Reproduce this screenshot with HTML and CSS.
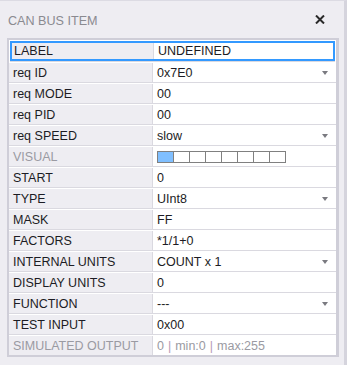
FILE: index.html
```html
<!DOCTYPE html>
<html>
<head>
<meta charset="utf-8">
<link rel="stylesheet" href="styles.css">
</head>
<body>
<div class="window">
  <div class="titlebar">
    <span class="title">CAN BUS ITEM</span>
    <svg class="close" width="10" height="9" viewBox="0 0 10 9"><path d="M1 0.5 L9 8.5 M9 0.5 L1 8.5" stroke="#2a2a2a" stroke-width="2"/></svg>
  </div>
  <div class="grid">
    <div class="row selected"><div class="name">LABEL</div><div class="value">UNDEFINED</div></div>
    <div class="row"><div class="name">req ID</div><div class="value">0x7E0<span class="arrow"></span></div></div>
    <div class="row"><div class="name">req MODE</div><div class="value">00</div></div>
    <div class="row"><div class="name">req PID</div><div class="value">00</div></div>
    <div class="row"><div class="name">req SPEED</div><div class="value">slow<span class="arrow"></span></div></div>
    <div class="row"><div class="name dim">VISUAL</div><div class="value"><div class="bar"><span class="seg on"></span><span class="seg"></span><span class="seg"></span><span class="seg"></span><span class="seg"></span><span class="seg"></span><span class="seg"></span><span class="seg"></span></div></div></div>
    <div class="row"><div class="name">START</div><div class="value">0</div></div>
    <div class="row"><div class="name">TYPE</div><div class="value">UInt8<span class="arrow"></span></div></div>
    <div class="row"><div class="name">MASK</div><div class="value">FF</div></div>
    <div class="row"><div class="name">FACTORS</div><div class="value">*1/1+0</div></div>
    <div class="row"><div class="name">INTERNAL UNITS</div><div class="value">COUNT x 1<span class="arrow"></span></div></div>
    <div class="row"><div class="name">DISPLAY UNITS</div><div class="value">0</div></div>
    <div class="row"><div class="name">FUNCTION</div><div class="value">---<span class="arrow"></span></div></div>
    <div class="row"><div class="name">TEST INPUT</div><div class="value">0x00</div></div>
    <div class="row last"><div class="name dim">SIMULATED OUTPUT</div><div class="value dim">0 <span class="pipe">|</span> min:0 <span class="pipe">|</span> max:255</div></div>
  </div>
</div>
</body>
</html>
```
FILE: styles.css
```css
html, body {
  margin: 0;
  padding: 0;
}
body {
  width: 347px;
  height: 365px;
  overflow: hidden;
  background: #eeedf2;
  font-family: "Liberation Sans", Arial, sans-serif;
}
.window {
  box-sizing: border-box;
  width: 347px;
  height: 365px;
  background: #eeedf2;
  border-top: 1px solid #dcdbe3;
  border-right: 3px solid #d5d4dd;
  padding: 0 5px 0 7px;
}
.titlebar {
  height: 37px;
  display: flex;
  align-items: center;
  justify-content: space-between;
  padding: 0 14px 0 1px;
}
.title {
  font-size: 12.6px;
  color: #8a8a90;
  padding-top: 2px;
}
.close {
  display: block;
  margin-top: 0;
}
.grid {
  border: 2px solid #cfced8;
  border-right-width: 3px;
  background: #ffffff;
  padding-top: 1px;
}
.row {
  display: grid;
  grid-template-columns: 144px 1fr;
  height: 21px;
  box-sizing: border-box;
  border-bottom: 1px solid #dad9e0;
  font-size: 12.5px;
  color: #1c1c24;
  padding-top: 1px;
}
.row.last {
  border-bottom: none;
  height: 20px;
}
.row.selected {
  box-shadow: inset 0 0 0 2px #3399ff;
  margin: 0 1px 0 1px;
  height: 21px;
  padding-top: 0;
}
.name {
  background: #eeedf2;
  border-right: 1px solid #dad9e0;
  padding-left: 4px;
  display: flex;
  align-items: center;
  white-space: nowrap;
}
.selected .name {
  margin: 2px 0 2px 2px;
  padding-left: 2px;
}
.value {
  position: relative;
  padding-left: 4px;
  display: flex;
  align-items: center;
  white-space: nowrap;
}
.dim {
  color: #9a9aa2;
}
.pipe {
  color: #b79bb5;
  margin: 0 4px;
}
.arrow {
  position: absolute;
  right: 8px;
  top: 8px;
  width: 0;
  height: 0;
  border-left: 3.5px solid transparent;
  border-right: 3.5px solid transparent;
  border-top: 4px solid #7a7a80;
}
.bar {
  display: flex;
  border: 1px solid #808080;
  height: 12px;
  box-sizing: border-box;
}
.seg {
  width: 15px;
  border-right: 1px solid #808080;
  background: #ffffff;
}
.seg:last-child {
  border-right: none;
}
.seg.on {
  background: #80bfff;
}
```
